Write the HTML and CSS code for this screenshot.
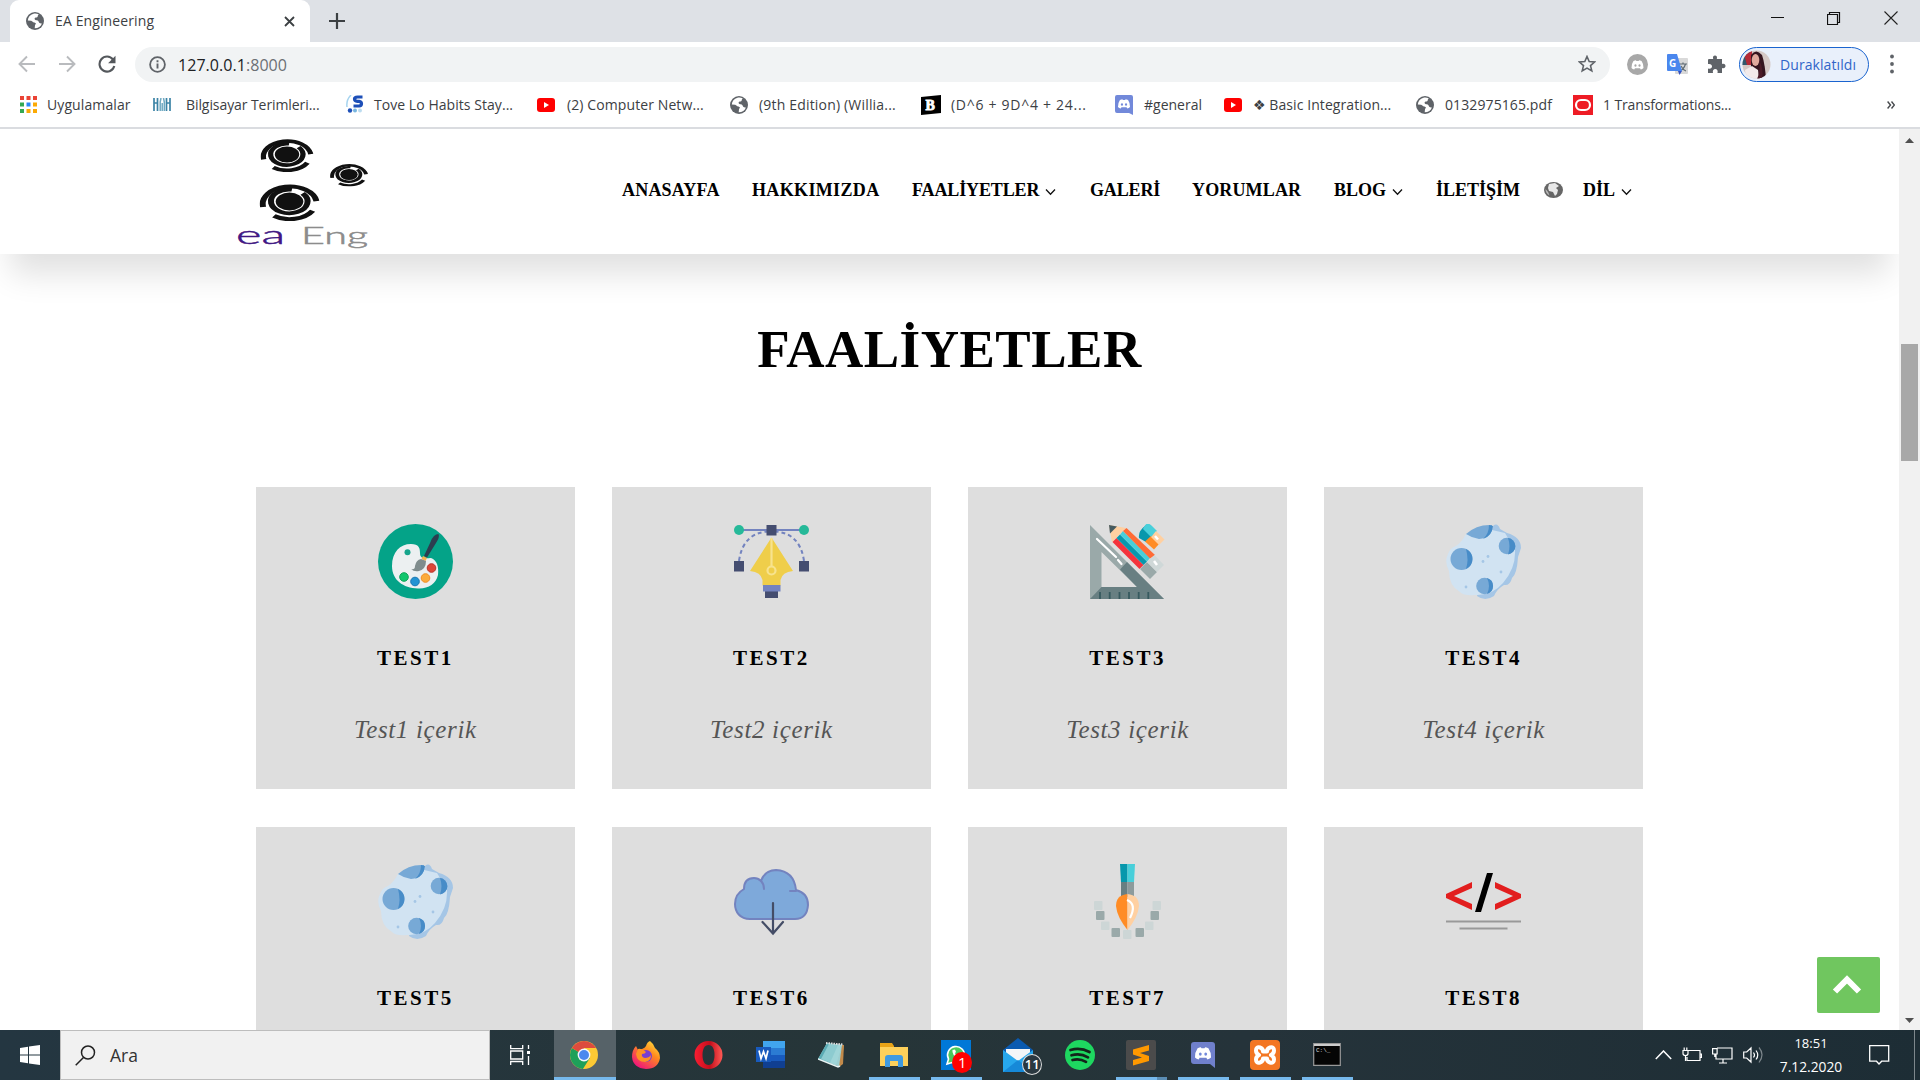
FILE: index.html
```
<!DOCTYPE html>
<html lang="tr">
<head>
<meta charset="utf-8">
<title>EA Engineering</title>
<link rel="stylesheet" href="styles.css">
</head>
<body>
<svg class="defs" aria-hidden="true">
  <symbol id="globe" viewBox="0 0 18 18"><circle cx="9" cy="9" r="9" fill="#5f6368"/><path d="M7.5 1.700C4 2.500 2 5 1.800 8.600l3.400.2 2.600 1.600c.6.4 1.600.1 2 .8.3.7-.7 1.200-.8 2l-.3 3c3.600 0 6.300-2 7.200-4.800-1.500.4-3-.4-3.300-1.800-.3-1.300-1.400-1.300-2.500-1.400-1-.1-1.800-.9-1.400-1.900.4-.9 1.700-.7 2.500-1.100.8-.5.3-1.400 1-2.200l.5-.7c-1.700-.8-3.500-1-5.200-.6z" fill="#fff"/></symbol>
  <symbol id="youtube" viewBox="0 0 18 14"><rect width="18" height="14" rx="3" fill="#f00"/><path d="M7 4l5 3-5 3z" fill="#fff"/></symbol>
  <symbol id="discord-face" viewBox="0 0 16 12"><path d="M3 1.200Q5 .2 6 .2l.6.9h2.800L10 .2q1 0 3 1 2.700 4 2.400 8.500-1.500 1.400-3.400 1.800l-.9-1.600H4.900L4 11.500Q2 11 .6 9.700.300 5.200 3 1.200z" fill="#fff"/><ellipse cx="5.500" cy="6.500" rx="1.300" ry="1.500" fill="currentColor"/><ellipse cx="10.500" cy="6.500" rx="1.300" ry="1.500" fill="currentColor"/></symbol>
  <symbol id="eye" viewBox="-100 -100 200 200" preserveAspectRatio="none"><g fill="none" stroke="#111"><circle r="46" fill="#111" stroke="none"/><path d="M8-61A61 61 0 1 0 44-42" stroke-width="20"/><path d="M-88 28A90 90 0 1 1 90-2" stroke-width="20"/><path d="M77 47A90 90 0 0 1-52 74" stroke-width="20"/></g></symbol>
  <symbol id="moon" viewBox="0 0 75 75"><path d="M44 6l4-5q4-2 6 4l7 4q14 4 14 15l-3 9q-1 17-6 21-2 8-8 7-7 4-10 11-9 6-17 0z" fill="#a5c6e6"/><path d="M20 10q-4 8-10 12-6 2-8 8-4 8 1 17 0 15 11 21 4 4 15 3 17 1 28-12 13-15 12-33L59 9 46 6 34 3z" fill="#d1e3f2"/><path d="M20 10Q31 0 46 1q1 13-13 14-7-1-13-5z" fill="#77a9d6"/><path d="M43 1l4 1q-1 10-10 13 6-5 6-14z" fill="#478cc8"/><circle cx="15.500" cy="35" r="11" fill="#77a9d6"/><path d="M20 25a11 11 0 0 1 0 20q3-9 0-20z" fill="#478cc8"/><circle cx="61" cy="22" r="8.300" fill="#77a9d6"/><path d="M62 14a8.300 8.300 0 0 1 0 16.500q3-8 0-16.500z" fill="#478cc8"/><circle cx="38.500" cy="62" r="8.300" fill="#77a9d6"/><path d="M41 54a8.300 8.300 0 0 1 0 16q4-8 0-16z" fill="#478cc8"/><g fill="#a5c6e6"><circle cx="42" cy="32.500" r="1.400"/><circle cx="37" cy="37.500" r="1.400"/><circle cx="55" cy="48" r="1.400"/><circle cx="20" cy="63" r="1.400"/></g></symbol>
  <symbol id="caret" viewBox="0 0 11 8"><path d="M1 1.500l4.500 4.800L10 1.500" fill="none" stroke="#111" stroke-width="1.300"/></symbol>
</svg>

<header class="tabstrip">
  <div class="tab">
    <svg width="18" height="18"><use href="#globe"/></svg>
    <span class="tab-title">EA Engineering</span>
    <svg class="tab-close" width="11" height="11" viewBox="0 0 11 11"><path d="M1 1l9 9M10 1l-9 9" stroke="#3c4043" stroke-width="1.800"/></svg>
  </div>
  <svg class="new-tab" width="16" height="16" viewBox="0 0 16 16"><path d="M8 0v16M0 8h16" stroke="#3c4043" stroke-width="2.200"/></svg>
  <div class="window-buttons">
    <svg width="14" height="14" viewBox="0 0 14 14"><path d="M1 6.500h13" stroke="#111"/></svg>
    <svg width="14" height="14" viewBox="0 0 14 14"><path d="M.5 3.500h10v10H.5zM2.500 3.500v-2h10v10h-2" fill="none" stroke="#111" stroke-width="1.200"/></svg>
    <svg width="14" height="14" viewBox="0 0 14 14"><path d="M.5.5l13 13M13.500.5l-13 13" stroke="#222" stroke-width="1.100"/></svg>
  </div>
</header>

<div class="toolbar">
  <div class="nav-buttons">
    <svg width="18" height="18" viewBox="0 0 18 18"><path d="M17 9H2M9 1.500L1.500 9 9 16.500" fill="none" stroke="#b9bbbe" stroke-width="1.900"/></svg>
    <svg width="18" height="18" viewBox="0 0 18 18"><path d="M1 9h15M9 1.500L16.500 9 9 16.500" fill="none" stroke="#b9bbbe" stroke-width="1.900"/></svg>
    <svg width="18" height="18" viewBox="0 0 18 18"><path d="M15 4.500A7.500 7.500 0 1 0 16.300 11" fill="none" stroke="#54585c" stroke-width="2.100"/><path d="M17.500.8v7.400h-7.400z" fill="#54585c"/></svg>
  </div>
  <div class="omnibox">
    <svg width="17" height="17" viewBox="0 0 17 17"><circle cx="8.500" cy="8.500" r="7.400" fill="none" stroke="#5f6368" stroke-width="1.800"/><path d="M8.500 7.500v5M8.500 4.300v1.900" stroke="#5f6368" stroke-width="1.900"/></svg>
    <span class="url">127.0.0.1<span class="port">:8000</span></span>
    <svg class="star" width="18" height="18" viewBox="0 0 18 18"><path d="M9 1.500l2.200 5 5.400.5-4.100 3.600 1.300 5.300L9 13.100l-4.800 2.800 1.300-5.300L1.400 7l5.400-.5z" fill="none" stroke="#5f6368" stroke-width="1.600"/></svg>
  </div>
  <div class="extensions">
    <svg width="21" height="21" viewBox="0 0 21 21" color="#a8a8a8"><circle cx="10.500" cy="10.500" r="10.500" fill="#a8a8a8"/><use href="#discord-face" x="4" y="6" width="13" height="10"/></svg>
    <svg width="21" height="21" viewBox="0 0 21 21"><rect x="8" y="4" width="13" height="16" rx="1" fill="#d9d9d9"/><path d="M12 10h8M16 8.500V10M18.500 10q-1.500 5-5.500 7M14 12q2 4 5 5" fill="none" stroke="#5f6b73" stroke-width="1.200"/><path d="M1 0h9l5 17H1q-1 0-1-1V1q0-1 1-1z" fill="#4a87ee"/><path d="M11 17h4l-2.500 4z" fill="#3552c0"/><text x="2" y="12.500" class="g-letter">G</text></svg>
    <svg width="19" height="19" viewBox="0 0 19 19"><path d="M2 4h4.200C5.500 1.500 6.600.5 8 .5s2.500 1 1.800 3.500H15v5c2.500-.7 3.500.6 3.500 2s-1 2.700-3.500 2v5h-4.500c.7-2.700-.6-4-2.200-4s-3 1.300-2.300 4H1v-4.500c2.700.7 4-.6 4-2.200S3.700 8.500 1 9V5q0-1 1-1z" fill="#5f6368"/></svg>
  </div>
  <div class="profile">
    <svg width="29" height="29" viewBox="0 0 29 29"><clipPath id="avatar"><circle cx="14.500" cy="14.500" r="14"/></clipPath><g clip-path="url(#avatar)"><path d="M0 0h29v29H0z" fill="#d5c9c6"/><path d="M0 0h8v15H0z" fill="#31586d"/><path d="M2 4l8-4v15H5z" fill="#b52a37"/><path d="M9 5q5-7 11 0 3 9 4 24h-8L9 17z" fill="#35151f"/><ellipse cx="13.500" cy="10" rx="3.800" ry="6" fill="#e0aa9d"/><path d="M3 20l7-4 6 4 1 9H4z" fill="#f2eaea"/><path d="M17 10q5 9 3 19h-5q4-8 2-19z" fill="#4b1b27"/></g></svg>
    <span>Duraklatıldı</span>
  </div>
  <svg class="kebab" width="4" height="20" viewBox="0 0 4 20"><g fill="#5f6368"><circle cx="2" cy="2.500" r="1.900"/><circle cx="2" cy="10" r="1.900"/><circle cx="2" cy="17.500" r="1.900"/></g></svg>
</div>

<nav class="bookmarks">
  <span class="bm bm-apps"><svg width="17" height="17" viewBox="0 0 17 17"><g fill="#ea4335"><path d="M0 0h4v4H0zM6.500 0h4v4h-4zM13 0h4v4h-4z"/></g><path d="M0 6.500h4v4H0zM0 13h4v4H0z" fill="#34a853"/><path d="M6.500 6.500h4v4h-4z" fill="#2a86f5"/><path d="M13 6.500h4v4h-4zM6.500 13h4v4h-4zM13 13h4v4h-4z" fill="#fbaa05"/></svg><b>Uygulamalar</b></span>
  <span class="bm bm-terms"><svg width="18" height="13" viewBox="0 0 18 13"><path d="M1 0v13M4.500 0v13M1 5h3.500M13.500 0v13M17 0v13M13.500 5H17" stroke="#3c84a6" stroke-width="1.700"/><path d="M7.200 13V4l.8-4M9.200 5v8M11.300 13V4l-.8-4" stroke="#6fa9c2" stroke-width="1.500" fill="none"/></svg><b>Bilgisayar Terimleri...</b></span>
  <span class="bm bm-tove"><svg width="18" height="19" viewBox="0 0 18 19"><path d="M5 0Q0 5 1 12" fill="none" stroke="#a6d4ef" stroke-width="1.500"/><path d="M16.500 2H11.500q-3 0-3 2t3 2.300h1.500q2.500.4 2.500 2.400T13 11H7.500" fill="none" stroke="#1d4fb8" stroke-width="3.200"/><circle cx="4" cy="15.500" r="2.200" fill="#1d4fb8"/><circle cx="9" cy="15.500" r="2" fill="#79b7df"/><circle cx="14" cy="15.500" r="2" fill="#bcdcf0"/></svg><b>Tove Lo Habits Stay...</b></span>
  <span class="bm bm-network"><svg width="18" height="14"><use href="#youtube"/></svg><b>(2) Computer Netw...</b></span>
  <span class="bm bm-edition"><svg width="18" height="18"><use href="#globe"/></svg><b>(9th Edition) (Willia...</b></span>
  <span class="bm bm-formula"><svg width="20" height="20" viewBox="0 0 20 20"><path d="M0 2l20-2v18L0 20z" fill="#000"/><text x="4.500" y="15" class="b-letter">B</text></svg><b>(D^6 + 9D^4 + 24...</b></span>
  <span class="bm bm-general"><svg width="18" height="20" viewBox="0 0 18 20" color="#7289da"><path d="M2 0h14q2 0 2 2v18l-4-2H2q-2 0-2-2V2q0-2 2-2z" fill="#7289da"/><use href="#discord-face" x="2.500" y="4" width="13" height="10"/></svg><b>#general</b></span>
  <span class="bm bm-basic"><svg width="18" height="14"><use href="#youtube"/></svg><b>❖ Basic Integration...</b></span>
  <span class="bm bm-pdf"><svg width="18" height="18"><use href="#globe"/></svg><b>0132975165.pdf</b></span>
  <span class="bm bm-oracle"><svg width="20" height="20" viewBox="0 0 20 20"><path d="M0 0h20v20H0z" fill="#ee1c25"/><rect x="3" y="5" width="14" height="10" rx="5" fill="none" stroke="#fff" stroke-width="2.200"/></svg><b>1 Transformations...</b></span>
  <svg class="overflow" width="8" height="8" viewBox="0 0 8 8"><path d="M.6.5L3.500 4 .6 7.500M4.500.5L7.400 4 4.500 7.500" fill="none" stroke="#46494d" stroke-width="1.400"/></svg>
</nav>

<div class="viewport">
  <main class="page">
    <header class="site-header">
      <svg class="logo" width="134" height="117" viewBox="0 0 134 117">
        <use href="#eye" x="24.500" y="0" width="53" height="35"/>
        <use href="#eye" x="94" y="25.500" width="38" height="24"/>
        <use href="#eye" x="23.500" y="45" width="60" height="39"/>
        <text x="0" y="107" class="logo-ea" textLength="49" lengthAdjust="spacingAndGlyphs">ea</text>
        <text x="65" y="107" class="logo-eng" textLength="67" lengthAdjust="spacingAndGlyphs">Eng</text>
      </svg>
      <nav class="menu">
        <a class="m-home">ANASAYFA</a>
        <a class="m-about">HAKKIMIZDA</a>
        <a class="m-services">FAALİYETLER<svg width="11" height="8"><use href="#caret"/></svg></a>
        <a class="m-gallery">GALERİ</a>
        <a class="m-comments">YORUMLAR</a>
        <a class="m-blog">BLOG<svg width="11" height="8"><use href="#caret"/></svg></a>
        <a class="m-contact">İLETİŞİM</a>
        <svg class="m-globe" width="19" height="16" viewBox="0 0 19 16"><ellipse cx="9.500" cy="8" rx="9.500" ry="8" fill="#666"/><path d="M5 2l6-1 4 3-3 2 2 2-1 4-2 2-2-4-4-1-1-3z" fill="#e8e8e8"/><path d="M1.500 7q0 4 4 6.500Q4 9 1.500 7z" fill="#bbb"/></svg>
        <a class="m-lang">DİL<svg width="11" height="8"><use href="#caret"/></svg></a>
      </nav>
    </header>

    <h1>FAALİYETLER</h1>

    <section class="cards">
      <article class="card">
        <svg width="75" height="75" viewBox="0 0 75 75"><circle cx="37.500" cy="37.500" r="37.500" fill="#04a388"/><path d="M14 42C14 28 22 20 33 20c8 0 9 4 9 9 0 7 6 5 11 5 6 2 8 9 7 17C58 60 50 65 40 64.500 25 64 14 56 14 42z" fill="#ecf0f1"/><circle cx="29.500" cy="28.300" r="3" fill="#16a58c"/><g stroke-width="1"><circle cx="26" cy="53" r="4.300" fill="#0fc66c" stroke="#0fa45a"/><circle cx="37" cy="57.500" r="4.300" fill="#2293d3" stroke="#1777b3"/><circle cx="47.500" cy="54" r="4.300" fill="#fbab3c" stroke="#f18d22"/><circle cx="53.500" cy="44" r="4.300" fill="#dd4637" stroke="#b93228"/></g><path d="M60.500 10q-5 0-8 8L46 32l3 1.500L58 19q4-6 2.500-9z" fill="#2c3e50"/><path d="M45 32l4 2-1.500 3-4-2z" fill="#f8b250"/><path d="M43 35l5 2q0 8-7 10-5 1-8-2 4 1 4-3 1-6 6-7z" fill="#7f8c8d"/></svg>
        <h2>TEST1</h2><p>Test1 içerik</p>
      </article>
      <article class="card">
        <svg width="75" height="75" viewBox="0 0 75 75"><path d="M5 6h65" stroke="#7383bf" stroke-width="2.200"/><path d="M5 37Q9 9 34 7.500M70 37Q66 9 41 7.500" fill="none" stroke="#7383bf" stroke-width="2" stroke-dasharray="4 3"/><circle cx="5" cy="6" r="5" fill="#26b999"/><circle cx="70" cy="6" r="5" fill="#26b999"/><path d="M32.500 1h10v10.500h-10zM0 37h10v10.500H0zM65 37h10v10.500H65zM31 67h13v7H31z" fill="#444d70"/><path d="M37.500 13.500L59 47q-11 1-12.500 9v5.500h-18V56Q27 48 16 47z" fill="#efce4a"/><path d="M37.500 14v28" stroke="#f7e38e" stroke-width="2.200"/><circle cx="37.500" cy="46.500" r="4" fill="none" stroke="#f7e38e" stroke-width="2.200"/><path d="M29 61h17.500v6.500H29z" fill="#7383bf"/></svg>
        <h2>TEST2</h2><p>Test2 içerik</p>
      </article>
      <article class="card">
        <svg width="75" height="75" viewBox="0 0 75 75"><path d="M0 1l74 74H0zM11.500 28v35H47z" fill="#9aa9a9" fill-rule="evenodd"/><path d="M37 38l37 37H0l11.500-12H47L30 45.500z" fill="#687f82"/><path d="M7 15l19 18M28 36l3.500 4" stroke="#fff" stroke-width="2.200" stroke-linecap="round"/><path d="M10 68v7M19.700 68v7M29.500 68v7M39 68v7M48.700 68v7M58.300 68v7" stroke="#375a5f" stroke-width="1.800"/><path d="M19 1l17 3-14 14z" fill="#ffd0a1"/><path d="M19 1l8 1.500-7 7z" fill="#455a60"/><path d="M22.500 18l4-4 27 27-4 4z" fill="#f4333c"/><path d="M26.500 14l3.500-3.500 27 27-3.500 3.500z" fill="#0797ac"/><path d="M30 10.500L33 7l27 27-3 3.500z" fill="#48cfda"/><path d="M33 7l3.500-3L65 31l-5 3.500z" fill="#ff6b35"/><path d="M50 45l7-7 10 10-7 7z" fill="#9aa9a9"/><path d="M57 38l7.500-7L74 41l-7 7z" fill="#cfd8d8"/><path d="M64 37l3 4" stroke="#fff" stroke-width="2.500"/><path d="M55 2q-7 5-6 12l7 4 9-8-5-9q-3-2-5 1z" fill="#0797ac"/><path d="M54 3q3-6 8-1l5 5-6 6-8-8z" fill="#48cfda"/><path d="M61 12l8 8-5 5.500-9-8z" fill="#ff8c25"/><path d="M66 7l8.500 8.500L69 21l-8-8z" fill="#ffd0a1"/><path d="M65 12l3 3.500" stroke="#fff" stroke-width="2.500"/></svg>
        <h2>TEST3</h2><p>Test3 içerik</p>
      </article>
      <article class="card">
        <svg width="75" height="75"><use href="#moon"/></svg>
        <h2>TEST4</h2><p>Test4 içerik</p>
      </article>
      <article class="card">
        <svg width="75" height="75"><use href="#moon"/></svg>
        <h2>TEST5</h2>
      </article>
      <article class="card">
        <svg width="75" height="75" viewBox="0 0 75 75"><g fill="#7ea9da" stroke="#7383bf" stroke-width="2" stroke-linecap="round" stroke-linejoin="round"><path d="M16 55C6 55 1 48 1 40q0-10 9-15 0-11 10-11 4 0 7 3Q31 6 42 6q18 1 20 20 12 3 12 15-1 14-13 14z"/><path d="M27 17q3 3 3 8M56 27h6" fill="none"/></g><path d="M39 39v30M28.500 58L39 69.500 49 58" fill="none" stroke="#444d66" stroke-width="2.200" stroke-linecap="round"/></svg>
        <h2>TEST6</h2>
      </article>
      <article class="card">
        <svg width="75" height="75" viewBox="0 0 75 75"><path d="M30 0h7.500v18H31z" fill="#0797ac"/><path d="M37.500 0H45l-1 18h-6.500z" fill="#48cfda"/><path d="M31 18h6.500v15H31z" fill="#687f82"/><path d="M37.500 18H44v15h-6.500z" fill="#8d9b9c"/><path d="M37.500 30Q26 31 26 42q1 11 11.500 24z" fill="#ff8c25"/><path d="M37.500 30Q49 31 49 42q-1 11-11.500 24z" fill="#ffd0a1"/><path d="M37 36q10 4 3 18" fill="none" stroke="#fff" stroke-width="2.200"/><g fill="#cdd6d6"><rect x="4" y="37" width="8.500" height="9" rx="1"/><rect x="62.500" y="37" width="8.500" height="9" rx="1"/><rect x="11" y="57.500" width="8.500" height="8.500" rx="1"/><rect x="55" y="57.500" width="8.500" height="8.500" rx="1"/><rect x="33" y="66" width="8.500" height="9" rx="1"/></g><g fill="#9aa9a9"><rect x="6" y="47" width="8.500" height="9" rx="1"/><rect x="60.500" y="47" width="8.500" height="9" rx="1"/><rect x="21.500" y="64" width="8.500" height="9" rx="1"/><rect x="45.500" y="64" width="8.500" height="9" rx="1"/></g></svg>
        <h2>TEST7</h2>
      </article>
      <article class="card">
        <svg width="75" height="75" viewBox="0 0 75 75"><path d="M26 18v6L8 32l18 8v6L0 34v-4zM49 18v6l18 8-18 8v6l26-12v-4z" fill="#e21e1e"/><path d="M41 9h6L35 48h-6z"/><path d="M0 57.500h75M13.500 64.500h48" stroke="#999" stroke-width="2"/></svg>
        <h2>TEST8</h2>
      </article>
    </section>
    <a class="to-top"><svg width="30" height="20" viewBox="0 0 30 20"><path d="M3 16.500l12-12 12 12" fill="none" stroke="#fff" stroke-width="6"/></svg></a>
  </main>
  <aside class="scrollbar">
    <svg width="9" height="5" viewBox="0 0 9 5"><path d="M0 5L4.500 0 9 5z" fill="#505050"/></svg>
    <div class="thumb"></div>
    <svg width="9" height="5" viewBox="0 0 9 5"><path d="M0 0l4.500 5L9 0z" fill="#505050"/></svg>
  </aside>
</div>

<footer class="taskbar">
  <div class="start"><svg width="20" height="20" viewBox="0 0 20 20"><path d="M0 3l8-1.200v7.700H0zM9 1.600L20 0v9.500H9zM0 10.500h8v7.700L0 17zM9 10.500h11V20L9 18.400z" fill="#fff"/></svg></div>
  <div class="search"><svg width="21" height="21" viewBox="0 0 21 21"><circle cx="13" cy="7.500" r="6.500" fill="none" stroke="#222" stroke-width="1.500"/><path d="M8.500 12.500L.7 20.300" stroke="#222" stroke-width="1.500"/></svg><span>Ara</span></div>
  <div class="task task-view"><svg width="21" height="20" viewBox="0 0 21 20"><path d="M.7 0v3.700h12V0M.7 6h12v8h-12zM.7 20v-3.500h12V20M18.500 0v4M18.500 11v9" fill="none" stroke="#fff" stroke-width="1.300"/><path d="M17 6h3v3h-3z" fill="#fff"/></svg></div>
  <div class="task active"><svg width="28" height="28" viewBox="0 0 28 28"><circle cx="14" cy="14" r="14" fill="#fcc934"/><path d="M14 14L1.900 7a14 14 0 0 0 11 21l7-11z" fill="#1fa05a"/><path d="M14 14L1.900 7A14 14 0 0 1 26.100 7H14z" fill="#dd4b3e"/><circle cx="14" cy="14" r="6.400" fill="#f4f7fc"/><circle cx="14" cy="14" r="5" fill="#4a88ee"/></svg></div>
  <div class="task"><svg width="28" height="28" viewBox="0 0 28 28"><defs><linearGradient id="fox" x1="1" y1="0" x2=".3" y2="1"><stop offset="0" stop-color="#fff044"/><stop offset=".45" stop-color="#ff8a1e"/><stop offset="1" stop-color="#f0147c"/></linearGradient></defs><path d="M18 0q4 3 5 7 5 4 5 10-2 11-14 11Q1 27 0 16q0-7 4-11l2 4 4-1q3-1 4-3 1-4 4-5z" fill="url(#fox)"/><circle cx="14" cy="15" r="6" fill="#7a3fd0"/><path d="M6 8q4-1 8 3-1 2-4 2-1 3 3 4 4 0 6-3 0 6-6 7-8 0-9-8z" fill="#ff9325"/></svg></div>
  <div class="task"><svg width="29" height="28" viewBox="0 0 29 28"><defs><linearGradient id="opera"><stop offset="0" stop-color="#fa1e32"/><stop offset=".55" stop-color="#c40e1c"/><stop offset="1" stop-color="#ff5a55"/></linearGradient></defs><path d="M14.500 0a14 14 0 0 0 0 28 14 14 0 0 0 0-28zm0 4c4 0 6 4 6 10s-2 10-6 10-6-4-6-10 2-10 6-10z" fill="url(#opera)" fill-rule="evenodd"/></svg></div>
  <div class="task"><svg width="29" height="27" viewBox="0 0 29 27"><path d="M7 0h22v7H7z" fill="#41a5ee"/><path d="M7 7h22v7H7z" fill="#2b7cd3"/><path d="M7 14h22v6H7z" fill="#185abd"/><path d="M7 20h22v7H7z" fill="#103f91"/><path d="M0 6h15v15H0z" fill="#185abd"/><path d="M3 9.500l2 8 2.500-7 2.500 7 2-8" fill="none" stroke="#fff" stroke-width="1.700"/></svg></div>
  <div class="task"><svg width="28" height="26" viewBox="0 0 28 26"><path d="M9 1l17 2-4 22-22-8z" fill="#9cced0"/><path d="M9 1l11 2-8 18-12-4z" fill="#5babb4"/><path d="M11 2l13 1-6 20-15-6z" fill="#a3d8dc" opacity=".7"/><path d="M24 3l2 0-1 19-4 3z" fill="#c28a4a"/><path d="M8 1l17 1.500" stroke="#ddd" stroke-width="2" stroke-dasharray="1.500 1"/><path d="M0 17l20 8 2-1" stroke="#e9f3f3" stroke-width="1.500" fill="none"/></svg></div>
  <div class="task open"><svg width="28" height="24" viewBox="0 0 28 24"><path d="M0 0h12l2 3v6H0z" fill="#e8a317"/><path d="M0 4h28v19H0z" fill="#fdd05a"/><path d="M5 24V15q0-3 3-3h12q3 0 3 3v9h-5v-6h-8v6z" fill="#3f9ae0"/></svg></div>
  <div class="task open badge-host"><svg width="30" height="30" viewBox="0 0 30 30"><path d="M0 0h30v30H0z" fill="#0078d7"/><path d="M6 24l1.500-5A8.500 8.500 0 1 1 11 22.500z" fill="#4bc85b" stroke="#fff" stroke-width="1.600"/><path d="M11.500 10q-1 5 6 9 3 0 2.500-3l-2.500-1-1 1q-2-1-2.500-3l1-1-1-2.500z" fill="#fff"/></svg><i class="badge red">1</i></div>
  <div class="task badge-host"><svg width="30" height="34" viewBox="0 0 30 34"><path d="M0 12L15 0l15 12v9H0z" fill="#0a5ab0"/><path d="M3 11h24v12H3z" fill="#f4f6f8"/><path d="M0 12l15 11 15-11v22H0z" fill="#27a7ec"/><path d="M0 34l15-12 15 12z" fill="#1689d8"/></svg><i class="badge dark">11</i></div>
  <div class="task"><svg width="30" height="30" viewBox="0 0 30 30"><circle cx="15" cy="15" r="15" fill="#1ed760"/><path d="M5.500 10q10-3 19 2M6.500 15.300q9-2.500 16.500 2M7.500 20q7-2 13.500 1.800" fill="none" stroke="#13241b" stroke-width="2.700" stroke-linecap="round"/></svg></div>
  <div class="task open split"><svg width="30" height="30" viewBox="0 0 30 30"><rect width="30" height="30" rx="2" fill="#4b4b4b"/><path d="M23 5v5.500L14 13l9 3v5L7 25.500V20l9-2.500-9-3v-5z" fill="#ff9800"/></svg></div>
  <div class="task open"><svg width="24" height="26" viewBox="0 0 24 26" color="#7289da"><path d="M3 0h18q3 0 3 3v23l-5-4H3q-3 0-3-3V3q0-3 3-3z" fill="#7080cc"/><use href="#discord-face" x="3" y="5" width="18" height="13"/></svg></div>
  <div class="task open"><svg width="30" height="30" viewBox="0 0 30 30"><rect width="30" height="30" rx="4" fill="#f37623"/><path d="M10 7.500q-4-1-4 3 0 3 3 4.500-3 1.500-3 4.500 0 4 4 3 3-1 3-4h4q0 3 3 4 4 1 4-3 0-3-3-4.500 3-1.500 3-4.500 0-4-4-3-3 1-3 4h-4q0-3-3-4z" fill="none" stroke="#fff" stroke-width="4" stroke-linejoin="round"/></svg></div>
  <div class="task open"><svg width="28" height="23" viewBox="0 0 28 23"><path d="M.7.7h26.600v21.600H.7z" fill="#050505" stroke="#999" stroke-width="1.200"/><path d="M1 1h26v2H1z" fill="#ccc"/><text x="3" y="8.500" class="cmd">C:\_</text></svg></div>
  <div class="tray">
    <svg width="17" height="10" viewBox="0 0 17 10"><path d="M.8 9l7.700-8 7.700 8" fill="none" stroke="#fff" stroke-width="1.500"/></svg>
    <svg width="20" height="16" viewBox="0 0 20 16"><path d="M6.500 3.500h11.500v10H5V10M18 7h1.400v3.500H18M1 3.500h5v3q0 2-2.500 2T1 6.500zM2.200 3.500V.5M4.800 3.500V.5M3.500 8.500V14" fill="none" stroke="#fff" stroke-width="1.200"/></svg>
    <svg width="21" height="17" viewBox="0 0 21 17"><path d="M5 1h15v11H4V7M11 12v4M7 16h8M.6 1.600h4.500V7H.6zM2.800 7v3" fill="none" stroke="#fff" stroke-width="1.200"/></svg>
    <svg width="21" height="18" viewBox="0 0 21 18"><path d="M.7 6h3L8 2v14l-4.300-4h-3zM10.500 6.500q2 2.500 0 5M13 4.500q3.500 4.500 0 9" fill="none" stroke="#fff" stroke-width="1.200"/><path d="M16 1.500q6 7 0 15" fill="none" stroke="#7d878c" stroke-width="1.200"/></svg>
  </div>
  <div class="clock"><span class="time">18:51</span><span class="date">7.12.2020</span></div>
  <svg class="notice" width="21" height="21" viewBox="0 0 21 21"><path d="M.7.7h19v15.500h-7L10 19l-2.500-2.800H.7z" fill="none" stroke="#fff" stroke-width="1.300"/></svg>
  <div class="show-desktop"></div>
</footer>
</body>
</html>
```
FILE: styles.css
```
* { box-sizing: border-box; }
body { margin: 0; width: 1920px; height: 1080px; overflow: hidden; display: flex; flex-direction: column; background: #fff; font-family: "Open Sans", "DejaVu Sans", sans-serif; font-size: 14px; color: #3c4043; }
svg { display: block; flex: none; }
.defs { position: absolute; width: 0; height: 0; }

/* browser chrome */
.tabstrip { height: 42px; flex: none; background: #dee1e6; display: flex; align-items: center; padding-left: 10px; }
.tab { width: 300px; height: 42px; background: #fff; border-radius: 9px 9px 0 0; display: flex; align-items: center; padding: 0 15px 0 16px; }
.tab-title { margin-left: 11px; letter-spacing: .12px; line-height: 20px; padding-bottom: 1px; }
.tab-close { margin-left: auto; }
.new-tab { margin-left: 19px; }
.window-buttons { margin-left: auto; display: flex; gap: 43px; padding: 0 22px 6px 0; }

.toolbar { height: 44px; flex: none; display: flex; align-items: center; padding: 0 26px 0 18px; }
.nav-buttons { display: flex; gap: 22px; width: 117px; }
.omnibox { width: 1475px; height: 35px; border-radius: 18px; background: #f1f3f4; display: flex; align-items: center; padding: 0 14px; }
.url { margin-left: 12px; font-size: 16px; color: #202124; line-height: 22px; padding-top: 1px; letter-spacing: .05px; }
.port { color: #6b6f74; }
.star { margin-left: auto; }
.extensions { display: flex; align-items: center; gap: 19px; margin-left: 17px; }
.g-letter { font: bold 10px "Open Sans", sans-serif; fill: #fff; }
.profile { margin-left: 13px; width: 130px; height: 35px; border: 1.5px solid #1a64cf; border-radius: 18px; background: #e9f0fb; display: flex; align-items: center; padding-left: 2px; color: #3165c9; letter-spacing: .08px; }
.profile span { margin-left: 9px; }
.kebab { margin-left: auto; }

.bookmarks { height: 43px; flex: none; border-bottom: 2px solid #dadce0; display: grid; grid-template-columns: 133px 193px 191px 193px 191px 194px 109px 192px 157px 314px 8px; padding: 0 0 4px 20px; align-items: center; }
.bm { display: flex; align-items: center; white-space: pre; }
.bm b { font-weight: normal; margin-left: 11px; line-height: 20px; }
.bm-apps { letter-spacing: .1px; }
.bm-apps b { margin-left: 10px; }
.bm-terms { letter-spacing: -.08px; }
.bm-terms b { margin-left: 15px; }
.bm-tove { letter-spacing: .05px; }
.bm-tove b { margin-left: 10px; }
.bm-network { letter-spacing: .1px; }
.bm-network b { margin-left: 12px; }
.bm-edition { letter-spacing: .18px; }
.bm-formula { letter-spacing: .72px; }
.bm-formula b { margin-left: 10px; }
.bm-basic { letter-spacing: .08px; }
.bm-pdf { letter-spacing: .1px; }
.bm-oracle { letter-spacing: -.13px; }
.bm-oracle b { margin-left: 10px; }
.b-letter { font: bold 14px "Liberation Serif", serif; fill: #fff; stroke: #fff; stroke-width: .8px; }

/* web page */
.viewport { height: 901px; flex: none; display: flex; overflow: hidden; }
.page { width: 1899px; height: 901px; position: relative; overflow: hidden; }
.site-header { height: 125px; background: #fff; box-shadow: 0 30px 30px -10px rgba(0, 0, 0, .12); display: flex; align-items: flex-start; padding: 8px 0 0 236px; }
.logo-ea { font: 300 26px Lato, sans-serif; fill: #3f1683; stroke: #3f1683; stroke-width: .5px; }
.logo-eng { font: 300 23px Lato, sans-serif; fill: #8c8c8c; stroke: #8c8c8c; stroke-width: .5px; }
.menu { margin: 40px 0 0 252px; display: grid; grid-template-columns: 130px 160px 178px 102px 142px 102px 108px 39px 60px; font: bold 18px/26px "Liberation Serif", serif; color: #000; align-items: center; }
.menu a { display: flex; align-items: center; white-space: nowrap; }
.menu a svg { margin: 4px 0 0 6px; }
.m-home { letter-spacing: .2px; }
.m-about { letter-spacing: .35px; }
.m-services { letter-spacing: -.12px; }
.m-gallery { letter-spacing: -.15px; }
.m-comments { letter-spacing: .15px; }

h1 { margin: 63px 0 0; text-align: center; font: bold 53px/64px "Liberation Serif", serif; letter-spacing: .5px; color: #000; }
.cards { margin: 106px 0 0 256px; width: 1387px; display: grid; grid-template-columns: repeat(4, 1fr); column-gap: 37.5px; row-gap: 38px; }
.card { height: 302px; background: #dedede; display: flex; flex-direction: column; align-items: center; padding-top: 37px; }
h2 { margin: 46px 0 0; font: bold 21px/26px "Liberation Serif", serif; letter-spacing: 2.5px; color: #000; }
.card p { margin: 41px 0 0; font: italic 25px/36px "Liberation Serif", serif; letter-spacing: .65px; color: #555; }
.to-top { position: absolute; left: 1817px; top: 828px; width: 63px; height: 56px; border-radius: 2px; background: #70c65f; display: flex; align-items: center; justify-content: center; padding-right: 3px; }

.scrollbar { width: 21px; background: #f1f1f1; display: flex; flex-direction: column; align-items: center; padding: 9px 1px 7px 0; }
.scrollbar .thumb { width: 17px; height: 117px; margin: 201px 0 auto; background: #a8a8a8; }

/* Windows taskbar */
.taskbar { height: 50px; flex: none; background: linear-gradient(90deg, #243641, #263538 45%, #25333a 65%, #1d2d35); display: flex; align-items: stretch; color: #fff; }
.start { width: 60px; display: flex; align-items: center; justify-content: center; }
.search { width: 430px; background: #f1f1f1; border: 1px solid #bdbdbd; display: flex; align-items: center; padding-left: 14px; font-size: 17.5px; color: #333; }
.search span { margin-left: 14px; }
.task { width: 61.9px; display: flex; align-items: center; justify-content: center; border-bottom: 3px solid transparent; padding: 2px 1px 0 0; }
.task-view { width: 64px; padding-right: 4px; }
.active { background: #566268; border-color: #76b9ed; }
.open { background: linear-gradient(#76b9ed, #76b9ed) 50% 100% / 51px 3px no-repeat; background-origin: border-box; }
.split { background: linear-gradient(90deg, #76b9ed 0 41px, #5b8db4 41px) 50% 100% / 51px 3px no-repeat; background-origin: border-box; }
.badge-host { position: relative; }
.badge { position: absolute; width: 20px; height: 21px; border-radius: 50%; font-style: normal; text-align: center; }
.red { left: 27px; top: 22px; background: #f00; font-size: 15px; line-height: 20px; }
.dark { left: 35px; top: 24px; background: #2a3840; border: 1px solid #ddd; font-size: 13px; font-weight: 600; line-height: 19px; }
.cmd { font: 6px "Liberation Mono", monospace; fill: #ddd; }
.tray { margin-left: auto; display: flex; align-items: center; gap: 10px; }
.clock { width: 94px; display: flex; flex-direction: column; align-items: center; line-height: 23px; padding-top: 2px; }
.time { font-size: 13px; }
.date { font-size: 13.8px; }
.notice { margin: 15px 24px 0 11px; }
.show-desktop { width: 6px; border-left: 1px solid #7d878c; }
```
